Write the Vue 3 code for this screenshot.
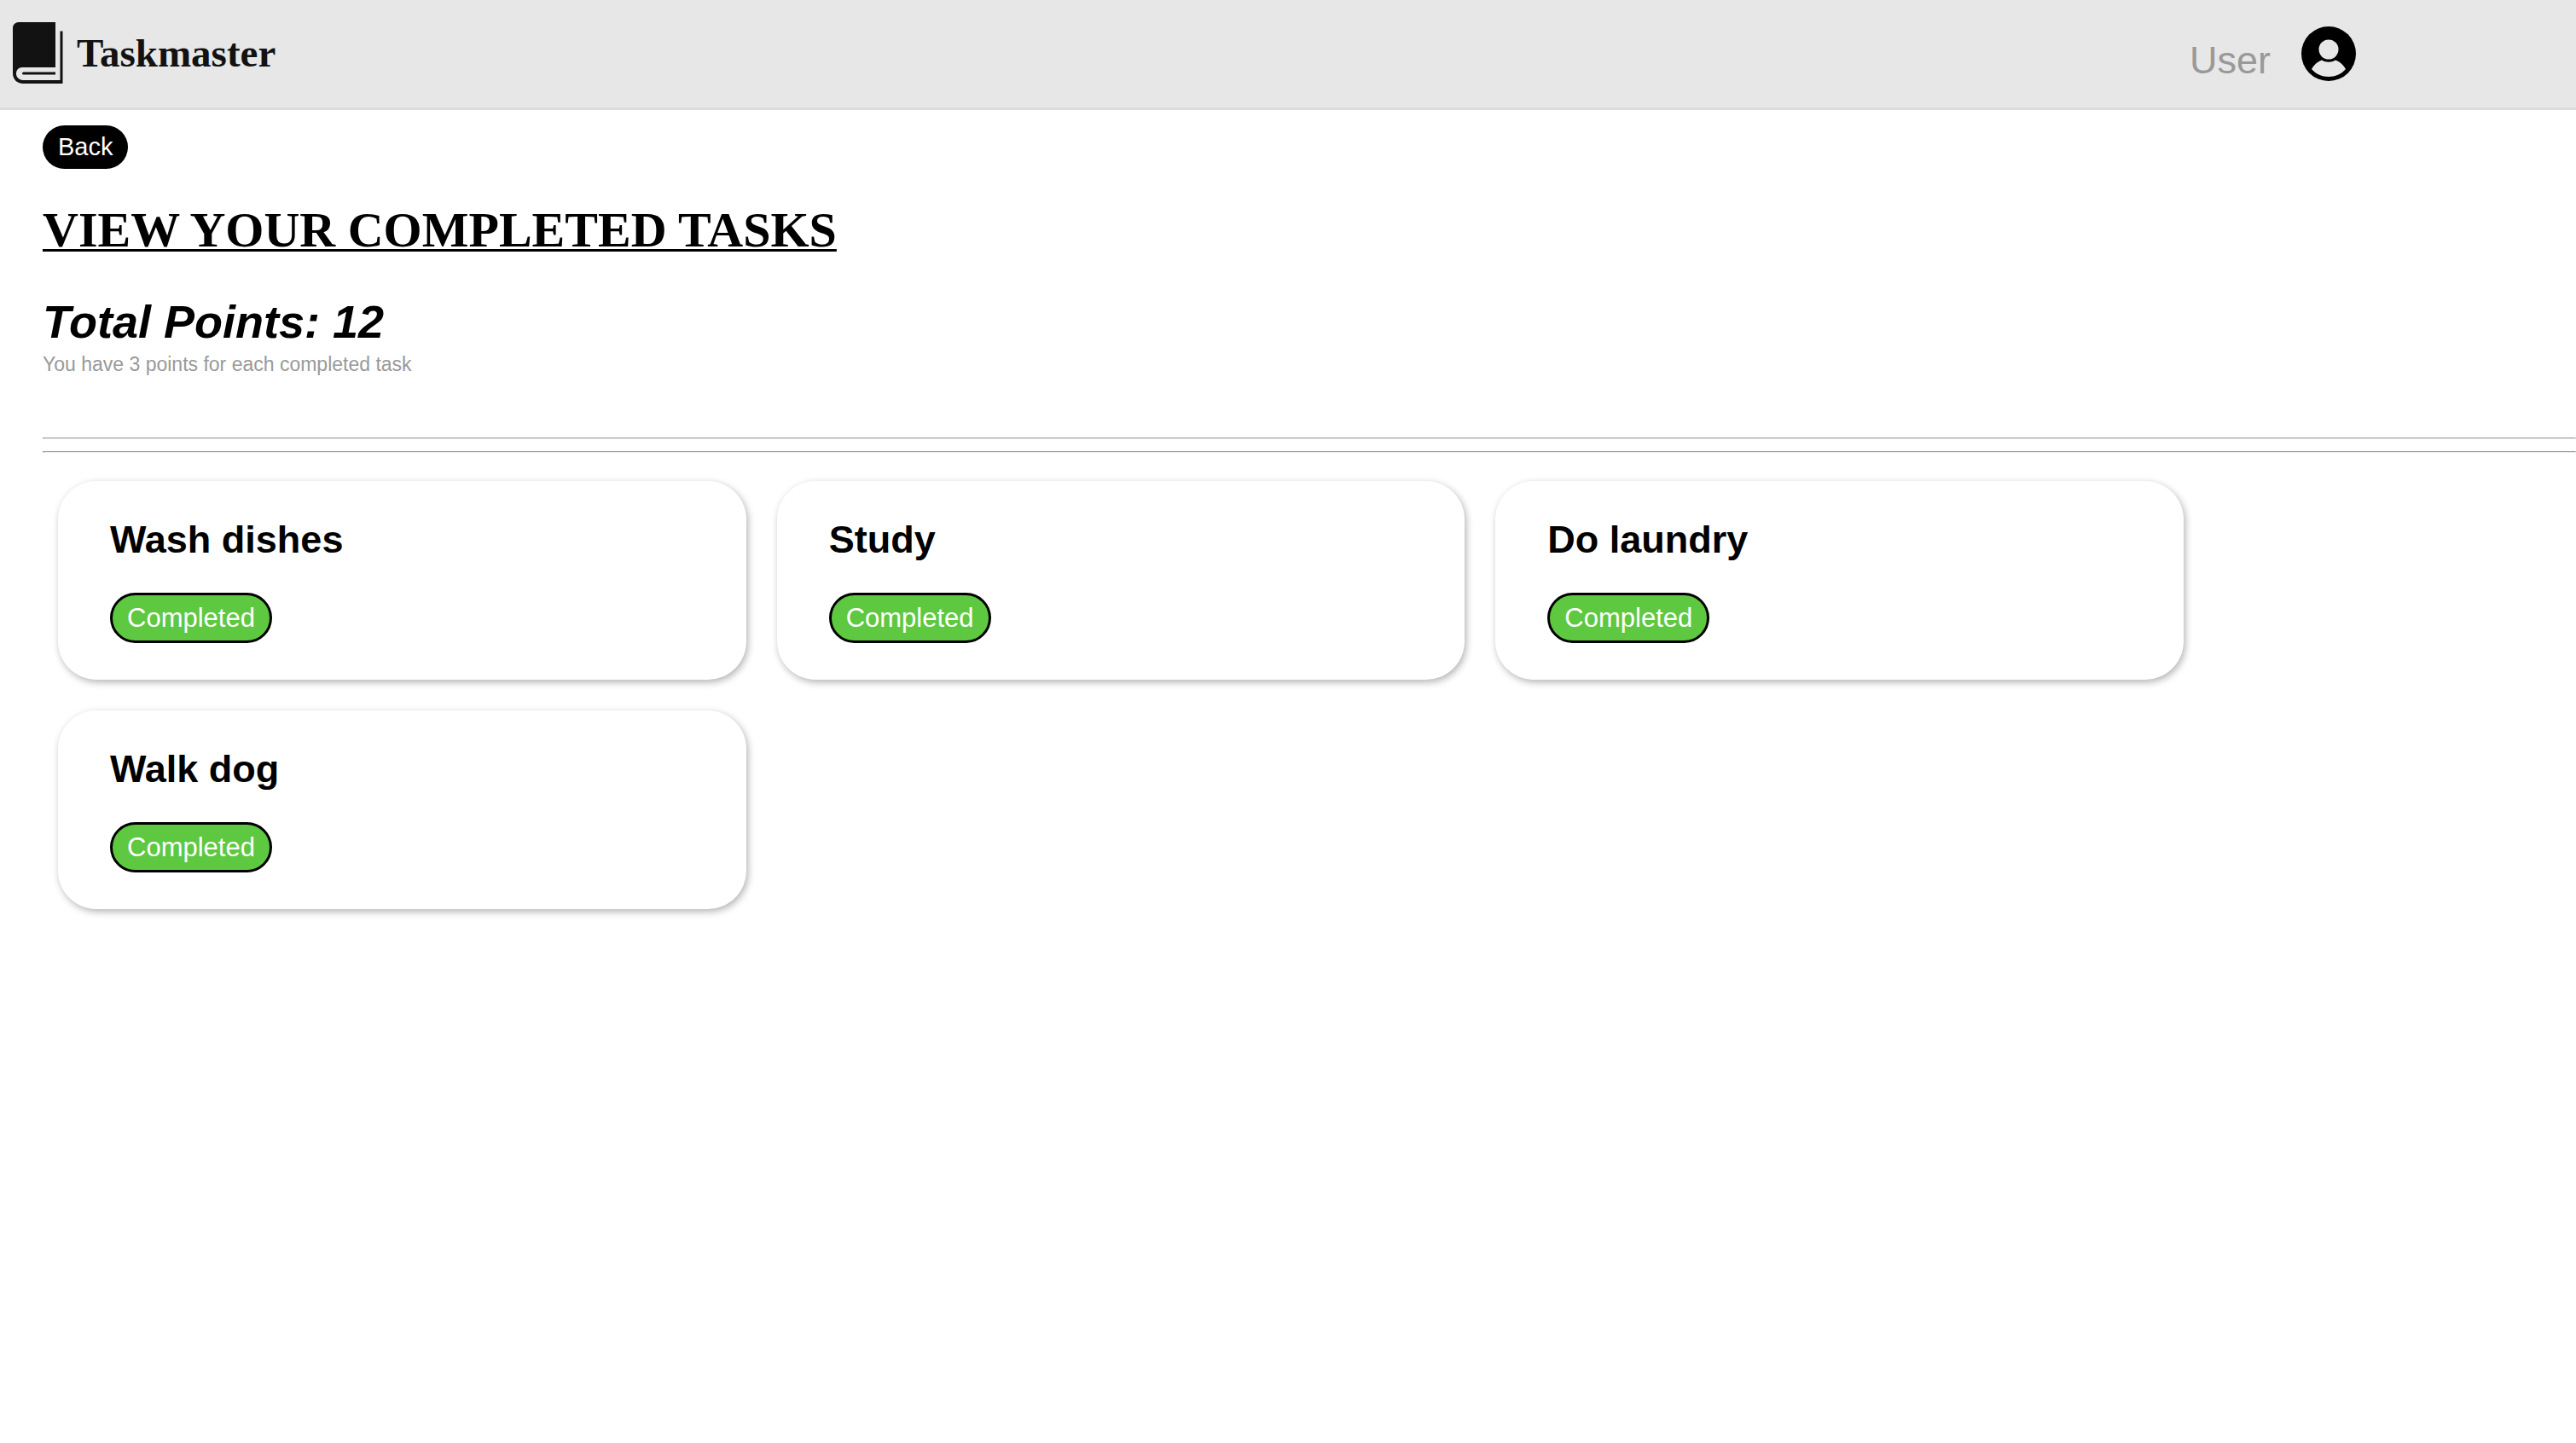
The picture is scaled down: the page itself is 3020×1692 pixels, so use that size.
<script setup>
const pointsPerTask = 3
const tasks = ['Wash dishes', 'Study', 'Do laundry', 'Walk dog']
</script>

<template>
  <div class="page">
    <header class="topbar">
      <a class="brand" href="#">
        <svg class="book" viewBox="0 0 59 72" aria-hidden="true">
          <path d="M7 0H50V53H11C6 53 4 57 4 60.500C4 64 7 68 12 68H55.500V10.500H58.500V72H12C5 72 0 67 0 60V7C0 3 3 0 7 0Z" fill="#121212" />
          <path d="M12.500 58.500H50V61.500H12.500A1.500 1.500 0 0 1 12.500 58.500Z" fill="#121212" />
        </svg>
        <span class="brand-name">Taskmaster</span>
      </a>
      <a class="account" href="#">
        <span class="user-name">User</span>
        <svg class="avatar" viewBox="0 0 64 64" aria-hidden="true">
          <circle cx="32" cy="32" r="32" />
          <circle cx="32" cy="27" r="11.500" fill="#e7e7e7" />
          <path d="M24 39.500C18.500 41.500 14.500 45.500 12 50C22 62 42 62 52 50C49.500 45.500 45.500 41.500 40 39.500C35 42.500 29 42.500 24 39.500Z" fill="#e7e7e7" />
        </svg>
      </a>
    </header>

    <main class="content">
      <button class="back" type="button">Back</button>
      <h1 class="title">VIEW YOUR COMPLETED TASKS</h1>
      <h2 class="points">Total Points: {{ tasks.length * pointsPerTask }}</h2>
      <p class="note">You have {{ pointsPerTask }} points for each completed task</p>
      <hr class="rule" />
      <hr class="rule" />
      <section class="tasks">
        <article v-for="task in tasks" :key="task" class="card">
          <h3 class="task-name">{{ task }}</h3>
          <button class="status" type="button">Completed</button>
        </article>
      </section>
    </main>
  </div>
</template>

<style>
body {
  margin: 0;
  background: #fff;
}
</style>

<style scoped>
.page {
  font-family: "Liberation Sans", Arial, sans-serif;
  color: #000;
}

.topbar {
  display: flex;
  align-items: center;
  justify-content: space-between;
  box-sizing: border-box;
  height: 129px;
  padding: 0 258px 0 15px;
  background: #e7e7e7;
  border-bottom: 3px solid #dcdcdc;
}

.brand,
.account {
  display: flex;
  align-items: center;
  text-decoration: none;
}

.brand {
  gap: 16px;
  padding-bottom: 2px;
  color: #121212;
}

.book {
  width: 59px;
  height: 72px;
}

.brand-name {
  font: bold 47px/52px "Liberation Serif", "Times New Roman", serif;
}

.account {
  gap: 36px;
  color: #999;
}

.user-name {
  padding-top: 16px;
  font-size: 45px;
  line-height: 52px;
}

.avatar {
  width: 64px;
  height: 64px;
}

.content {
  padding: 18px 0 0 50px;
}

.back {
  display: block;
  padding: 9px 18px;
  border: 0;
  border-radius: 26px;
  background: #000;
  color: #fff;
  font: 29px/33px "Liberation Sans", Arial, sans-serif;
}

.title {
  margin: 39px 0 0;
  font: bold 58px/66px "Liberation Serif", "Times New Roman", serif;
  text-decoration: underline;
  text-decoration-thickness: 3px;
  text-underline-offset: 3px;
  text-decoration-skip-ink: none;
}

.points {
  margin: 42px 0 0;
  font-size: 54px;
  font-style: italic;
  line-height: 64px;
}

.note {
  margin: 5px 0 73px;
  color: #999;
  font-size: 23px;
  line-height: 26px;
}

.rule {
  margin: 14px 0;
  border: 1px solid #9a9a9a;
  border-color: #9a9a9a #eee #eee #9a9a9a;
}

.tasks {
  display: grid;
  grid-template-columns: repeat(3, 1fr);
  gap: 36px;
  padding: 19px 460px 36px 18px;
}

.card {
  padding: 43px 61px;
  border-radius: 45px;
  background: #fff;
  box-shadow: 2px 3px 8px rgba(0, 0, 0, 0.3);
}

.task-name {
  margin: 0 0 36px;
  font-size: 45px;
  line-height: 52px;
}

.status {
  display: block;
  padding: 9px 17px;
  border: 3px solid #000;
  border-radius: 30px;
  background: #5ec840;
  color: #fff;
  font: 31px/35px "Liberation Sans", Arial, sans-serif;
}
</style>
